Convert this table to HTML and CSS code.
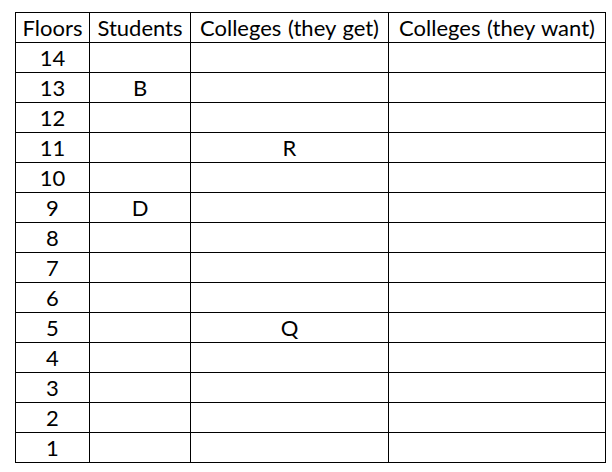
FILE: index.html
```html
<!DOCTYPE html>
<html>
<head>
<meta charset="utf-8">
<link rel="stylesheet" href="styles.css">
</head>
<body>
<table class="grid">
  <colgroup>
    <col class="c-floor">
    <col class="c-stud">
    <col class="c-get">
    <col class="c-want">
  </colgroup>
  <thead>
    <tr><th>Floors</th><th>Students</th><th>Colleges (they get)</th><th>Colleges (they want)</th></tr>
  </thead>
  <tbody>
    <tr><td>14</td><td></td><td></td><td></td></tr>
    <tr><td>13</td><td>B</td><td></td><td></td></tr>
    <tr><td>12</td><td></td><td></td><td></td></tr>
    <tr><td>11</td><td></td><td>R</td><td></td></tr>
    <tr><td>10</td><td></td><td></td><td></td></tr>
    <tr><td>9</td><td>D</td><td></td><td></td></tr>
    <tr><td>8</td><td></td><td></td><td></td></tr>
    <tr><td>7</td><td></td><td></td><td></td></tr>
    <tr><td>6</td><td></td><td></td><td></td></tr>
    <tr><td>5</td><td></td><td>Q</td><td></td></tr>
    <tr><td>4</td><td></td><td></td><td></td></tr>
    <tr><td>3</td><td></td><td></td><td></td></tr>
    <tr><td>2</td><td></td><td></td><td></td></tr>
    <tr><td>1</td><td></td><td></td><td></td></tr>
  </tbody>
</table>
</body>
</html>
```
FILE: styles.css
```css
html, body {
  margin: 0;
  background: #ffffff;
}
body {
  padding: 12px 0 0 15px;
  font-family: "Lato", "Open Sans", sans-serif;
  color: #000;
}
.grid {
  border-collapse: collapse;
  table-layout: fixed;
  width: 590px;
}
.c-floor { width: 74px; }
.c-stud { width: 101px; }
.c-get { width: 198px; }
.c-want { width: 217px; }
.grid th,
.grid td {
  border: 1px solid #000;
  height: 29px;
  padding: 0;
  font-size: 22px;
  font-weight: normal;
  text-align: center;
  vertical-align: middle;
  line-height: 29px;
  white-space: nowrap;
}
.grid th {
  word-spacing: 1px;
}
```
